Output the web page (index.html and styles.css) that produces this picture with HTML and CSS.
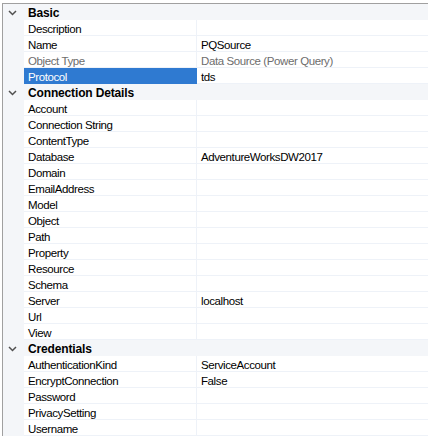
FILE: index.html
```html
<!DOCTYPE html>
<html lang="en">
<head>
    <meta charset="UTF-8">
    <title>Properties</title>
    <link rel="stylesheet" href="styles.css">
</head>
<body>
    <div class="grid">
        <div class="cat">
            <span class="toggle"><svg width="9" height="6" viewBox="0 0 9 6"><path d="M1 1 L4.5 4.5 L8 1" fill="none" stroke="#505050" stroke-width="1.5"/></svg></span>
            <span class="cat-name">Basic</span>
        </div>
        <div class="prop"><span class="gutter"></span><span class="label">Description</span><span class="value"></span></div>
        <div class="prop"><span class="gutter"></span><span class="label">Name</span><span class="value">PQSource</span></div>
        <div class="prop readonly"><span class="gutter"></span><span class="label">Object Type</span><span class="value">Data Source (Power Query)</span></div>
        <div class="prop selected"><span class="gutter"></span><span class="label">Protocol</span><span class="value">tds</span></div>

        <div class="cat">
            <span class="toggle"><svg width="9" height="6" viewBox="0 0 9 6"><path d="M1 1 L4.5 4.5 L8 1" fill="none" stroke="#505050" stroke-width="1.5"/></svg></span>
            <span class="cat-name">Connection Details</span>
        </div>
        <div class="prop"><span class="gutter"></span><span class="label">Account</span><span class="value"></span></div>
        <div class="prop"><span class="gutter"></span><span class="label">Connection String</span><span class="value"></span></div>
        <div class="prop"><span class="gutter"></span><span class="label">ContentType</span><span class="value"></span></div>
        <div class="prop"><span class="gutter"></span><span class="label">Database</span><span class="value">AdventureWorksDW2017</span></div>
        <div class="prop"><span class="gutter"></span><span class="label">Domain</span><span class="value"></span></div>
        <div class="prop"><span class="gutter"></span><span class="label">EmailAddress</span><span class="value"></span></div>
        <div class="prop"><span class="gutter"></span><span class="label">Model</span><span class="value"></span></div>
        <div class="prop"><span class="gutter"></span><span class="label">Object</span><span class="value"></span></div>
        <div class="prop"><span class="gutter"></span><span class="label">Path</span><span class="value"></span></div>
        <div class="prop"><span class="gutter"></span><span class="label">Property</span><span class="value"></span></div>
        <div class="prop"><span class="gutter"></span><span class="label">Resource</span><span class="value"></span></div>
        <div class="prop"><span class="gutter"></span><span class="label">Schema</span><span class="value"></span></div>
        <div class="prop"><span class="gutter"></span><span class="label">Server</span><span class="value">localhost</span></div>
        <div class="prop"><span class="gutter"></span><span class="label">Url</span><span class="value"></span></div>
        <div class="prop"><span class="gutter"></span><span class="label">View</span><span class="value"></span></div>

        <div class="cat">
            <span class="toggle"><svg width="9" height="6" viewBox="0 0 9 6"><path d="M1 1 L4.5 4.5 L8 1" fill="none" stroke="#505050" stroke-width="1.5"/></svg></span>
            <span class="cat-name">Credentials</span>
        </div>
        <div class="prop"><span class="gutter"></span><span class="label">AuthenticationKind</span><span class="value">ServiceAccount</span></div>
        <div class="prop"><span class="gutter"></span><span class="label">EncryptConnection</span><span class="value">False</span></div>
        <div class="prop"><span class="gutter"></span><span class="label">Password</span><span class="value"></span></div>
        <div class="prop"><span class="gutter"></span><span class="label">PrivacySetting</span><span class="value"></span></div>
        <div class="prop"><span class="gutter"></span><span class="label">Username</span><span class="value"></span></div>
    </div>
</body>
</html>
```

FILE: styles.css
```css
body {
    margin: 0;
    background: #fff;
    font-family: "Liberation Sans", Arial, sans-serif;
    font-size: 11.5px;
    letter-spacing: -0.4px;
    color: #000;
}

.grid {
    margin: 3px 0 0 2px;
    border-top: 1px solid #a0a0a0;
    border-left: 1px solid #a0a0a0;
    background: #f4f6f9;
}

/* category header rows */
.cat {
    display: flex;
    align-items: center;
    height: 16px;
    background: #f4f6f9;
}

.toggle {
    width: 21px;
    display: flex;
    justify-content: center;
    padding: 2px 2px 0 0;
    box-sizing: border-box;
}

.toggle svg {
    display: block;
}

.cat-name {
    padding: 2px 0 0 4px;
    font-weight: bold;
    font-size: 12px;
    letter-spacing: -0.15px;
    line-height: 15px;
}

/* property rows */
.prop {
    display: flex;
    height: 16px;
}

.gutter {
    width: 21px;
    flex: none;
    background: #f4f6f9;
}

.label,
.value {
    box-sizing: border-box;
    height: 16px;
    padding: 3px 0 0 4px;
    line-height: 12px;
    background: #fff;
    border-bottom: 1px solid #eef2f8;
    white-space: nowrap;
    overflow: hidden;
}

.label {
    width: 173px;
    flex: none;
    border-right: 1px solid #eef2f8;
}

.value {
    flex: 1;
}

.readonly .label,
.readonly .value {
    color: #6d6d6d;
}

.selected .label {
    background: #2f7ad1;
    color: #fff;
    border-bottom-color: #2f7ad1;
    border-right-color: #2f7ad1;
}
```
